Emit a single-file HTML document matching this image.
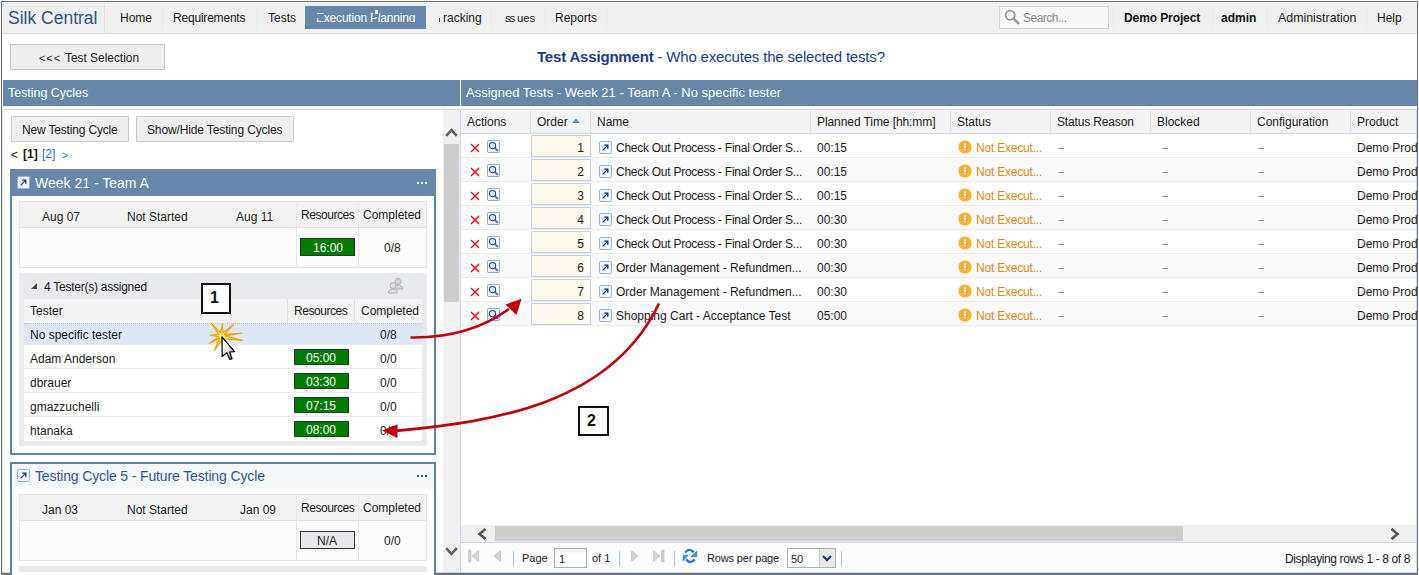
<!DOCTYPE html><html><head><meta charset="utf-8"><style>
*{box-sizing:border-box;margin:0;padding:0}
html,body{width:1419px;height:575px;overflow:hidden;background:#fff}
body{font-family:"Liberation Sans",sans-serif;font-size:12px;color:#1b1b1b;position:relative}
.a{position:absolute;white-space:nowrap}
.t{line-height:16px}
svg{position:absolute;overflow:visible}
</style></head><body>
<div class="a" style="left:1px;top:1px;width:1417px;height:1px;background:#6b7177"></div>
<div class="a" style="left:1px;top:1px;width:1px;height:574px;background:#6b7177"></div>
<div class="a" style="left:1417px;top:1px;width:1px;height:574px;background:#6b7177"></div>
<div class="a" style="left:1px;top:573px;width:1417px;height:2px;background:#6b7177"></div>
<div class="a" style="left:2px;top:2px;width:1415px;height:31px;background:#f0f0f0"></div>
<div class="a" style="left:2px;top:33px;width:1415px;height:1px;background:#d9d9d9"></div>
<div class="a t" style="left:8px;top:8px;font-size:17.5px;color:#34527a;line-height:20px">Silk Central</div>
<div class="a" style="left:104px;top:3px;width:1px;height:30px;background:#e2e2e2"></div>
<div class="a" style="left:162px;top:5px;width:1px;height:25px;background:#ebebeb"></div>
<div class="a" style="left:256px;top:5px;width:1px;height:25px;background:#ebebeb"></div>
<div class="a" style="left:491px;top:5px;width:1px;height:25px;background:#ebebeb"></div>
<div class="a" style="left:545px;top:5px;width:1px;height:25px;background:#ebebeb"></div>
<div class="a" style="left:606px;top:5px;width:1px;height:25px;background:#ebebeb"></div>
<div class="a" style="left:1113px;top:5px;width:1px;height:25px;background:#ebebeb"></div>
<div class="a" style="left:1212px;top:5px;width:1px;height:25px;background:#ebebeb"></div>
<div class="a" style="left:1267px;top:5px;width:1px;height:25px;background:#ebebeb"></div>
<div class="a" style="left:1366px;top:5px;width:1px;height:25px;background:#ebebeb"></div>
<div class="a t" style="left:120px;top:10px;font-size:12px">Home</div>
<div class="a t" style="left:173px;top:10px;font-size:12px;letter-spacing:-0.2px">Requirements</div>
<div class="a t" style="left:268px;top:10px;font-size:12px">Tests</div>
<div class="a" style="left:305px;top:6px;width:121px;height:23px;background:#6787aa"></div>
<div class="a t" style="left:316px;top:10px;font-size:12px;color:#fff;letter-spacing:-0.2px">Execution Planning</div>
<div class="a" style="left:315px;top:14px;width:8px;height:4px;background:#6787aa"></div>
<div class="a" style="left:373px;top:13px;width:6px;height:4px;background:#6787aa"></div>
<div class="a" style="left:375px;top:10px;width:3px;height:4px;background:#f4f4f4"></div>
<div class="a" style="left:402px;top:22px;width:17px;height:4px;background:#6787aa"></div>
<div class="a" style="left:439px;top:18px;width:1px;height:4px;background:#555"></div>
<div class="a t" style="left:443px;top:10px;font-size:12px">racking</div>
<div class="a t" style="left:505px;top:10px;font-size:11.5px;letter-spacing:-1.2px">ss</div>
<div class="a" style="left:510px;top:13px;width:4px;height:3px;background:#f0f0f0"></div>
<div class="a t" style="left:517px;top:10px;font-size:11.3px">ues</div>
<div class="a t" style="left:555px;top:10px;font-size:12px">Reports</div>
<div class="a" style="left:999px;top:6px;width:110px;height:23px;background:#f8f8f8;border:1px solid #d6d6d6"></div>
<div class="a t" style="left:1023px;top:10px;font-size:12px;color:#8a8a8a;letter-spacing:-0.5px">Search...</div>
<div class="a t" style="left:1124px;top:10px;font-size:12px;color:#111;font-weight:bold;letter-spacing:-0.1px">Demo Project</div>
<div class="a t" style="left:1221px;top:10px;font-size:12px;color:#111;font-weight:bold">admin</div>
<div class="a t" style="left:1278px;top:10px;font-size:12.4px">Administration</div>
<div class="a t" style="left:1377px;top:10px;font-size:12px">Help</div>
<div class="a" style="left:10px;top:44px;width:155px;height:26px;background:#efefef;border:1px solid #c6c6c6"></div>
<div class="a t" style="left:39px;top:50px;font-size:11px;letter-spacing:0.9px">&lt;&lt;&lt;</div>
<div class="a t" style="left:65px;top:50px;font-size:11.9px">Test Selection</div>
<div class="a t" style="left:537px;top:48px;font-size:15px;color:#1b3c8c;letter-spacing:-0.18px;line-height:18px"><b>Test Assignment</b> - Who executes the selected tests?</div>
<div class="a" style="left:3px;top:80px;width:457px;height:26px;background:#6787aa"></div>
<div class="a" style="left:461px;top:80px;width:956px;height:26px;background:#6787aa"></div>
<div class="a t" style="left:8px;top:85px;font-size:12.45px;color:#fff">Testing Cycles</div>
<div class="a t" style="left:466px;top:85px;font-size:13px;color:#fff">Assigned Tests - Week 21 - Team A - No specific tester</div>
<div class="a" style="left:2px;top:109px;width:1415px;height:1px;background:#c9d8ee"></div>
<div class="a" style="left:460px;top:109px;width:1px;height:464px;background:#c9d8ee"></div>
<div class="a" style="left:2px;top:109px;width:1px;height:464px;background:#d6e2f2"></div>
<div class="a" style="left:1416px;top:109px;width:1px;height:464px;background:#c9d8ee"></div>
<div class="a" style="left:2px;top:572px;width:1415px;height:1px;background:#c9d8ee"></div>

<div class="a" style="left:11px;top:116px;width:118px;height:26px;background:#efefef;border:1px solid #cacaca"></div>
<div class="a t" style="left:22px;top:122px;font-size:12px;letter-spacing:-0.17px">New Testing Cycle</div>
<div class="a" style="left:136px;top:116px;width:158px;height:26px;background:#efefef;border:1px solid #cacaca"></div>
<div class="a t" style="left:147px;top:122px;font-size:12px;letter-spacing:-0.13px">Show/Hide Testing Cycles</div>
<div class="a t" style="left:11px;top:147px;font-size:12px;color:#111">&lt;</div>
<div class="a t" style="left:23px;top:146px;font-size:12px;color:#111;font-weight:bold">[1]</div>
<div class="a t" style="left:42px;top:146px;font-size:12px;color:#2a6fd6">[2]</div>
<div class="a t" style="left:62px;top:147px;font-size:11px;color:#2a6fd6">&gt;</div>
<div class="a" style="left:443px;top:110px;width:17px;height:462px;background:#f0f0f0"></div>
<div class="a" style="left:444px;top:144px;width:15px;height:158px;background:#cdcdcd"></div>
<svg style="left:445px;top:127px" width="13" height="10" viewBox="0 0 13 10"><path d="M1.2 8.8 L6.5 3.2 L11.8 8.8" fill="none" stroke="#606060" stroke-width="2.6"/></svg>
<svg style="left:445px;top:547px" width="13" height="10" viewBox="0 0 13 10"><path d="M1.2 1.2 L6.5 6.8 L11.8 1.2" fill="none" stroke="#606060" stroke-width="2.6"/></svg>
<div class="a" style="left:10px;top:169px;width:426px;height:286px;border:2px solid #5f80a8;background:#fff"></div>
<div class="a" style="left:10px;top:169px;width:426px;height:27px;background:#6787aa"></div>
<svg style="left:17px;top:176px" width="13" height="13" viewBox="0 0 13 13"><rect x="0.5" y="0.5" width="12" height="12" rx="1.5" fill="#f4f8fd" stroke="#8fb5e3"/><path d="M3.6 9.4 L8.6 4.4" stroke="#10288a" stroke-width="1.1"/><path d="M5.2 4.2 H8.8 V7.8" fill="none" stroke="#10288a" stroke-width="1.3"/></svg>
<div class="a t" style="left:35px;top:175px;font-size:14px;color:#fff">Week 21 - Team A</div>
<div class="a" style="left:417px;top:182px;width:2px;height:2px;background:#fff"></div>
<div class="a" style="left:421px;top:182px;width:2px;height:2px;background:#fff"></div>
<div class="a" style="left:425px;top:182px;width:2px;height:2px;background:#fff"></div>
<div class="a" style="left:19px;top:201px;width:408px;height:67px;background:#fcfcfc;border:1px solid #e3e3e3"></div>
<div class="a" style="left:20px;top:202px;width:406px;height:25px;background:#f2f2f2"></div>
<div class="a" style="left:20px;top:227px;width:406px;height:1px;background:#e3e3e3"></div>
<div class="a" style="left:296px;top:202px;width:1px;height:65px;background:#e6e6e6"></div>
<div class="a" style="left:358px;top:202px;width:1px;height:65px;background:#e6e6e6"></div>
<div class="a t" style="left:42px;top:209px;font-size:12px">Aug 07</div>
<div class="a t" style="left:127px;top:209px;font-size:12px">Not Started</div>
<div class="a t" style="left:236px;top:209px;font-size:12px">Aug 11</div>
<div class="a t" style="left:301px;top:207px;font-size:12px;letter-spacing:-0.45px">Resources</div>
<div class="a t" style="left:363px;top:207px;font-size:12px">Completed</div>
<div class="a" style="left:300px;top:238px;width:55px;height:18px;background:#007a00;border:1px solid #1f3d1f"></div>
<div class="a t" style="left:313px;top:240px;font-size:12px;color:#fff">16:00</div>
<div class="a t" style="left:384px;top:240px;font-size:12px">0/8</div>
<div class="a" style="left:19px;top:273px;width:408px;height:173px;background:#e9eaee"></div>
<svg style="left:30px;top:282px" width="8" height="8" viewBox="0 0 8 8"><path d="M7 1 V7 H1 Z" fill="#444"/></svg>
<div class="a t" style="left:44px;top:279px;font-size:12px;letter-spacing:-0.25px">4 Tester(s) assigned</div>
<svg style="left:387px;top:277px" width="17" height="17" viewBox="0 0 17 17"><circle cx="11" cy="4.5" r="3" fill="#d6d6d6" stroke="#a8a8a8" stroke-width=".8"/><path d="M6.5 12 Q6.5 8 11 8 Q15.5 8 15.5 12 Z" fill="#d6d6d6" stroke="#a8a8a8" stroke-width=".8"/><circle cx="6" cy="8.5" r="3" fill="#e0e0e0" stroke="#a8a8a8" stroke-width=".8"/><path d="M1.5 16 Q1.5 12 6 12 Q10.5 12 10.5 16 Z" fill="#e0e0e0" stroke="#a8a8a8" stroke-width=".8"/></svg>
<div class="a" style="left:24px;top:299px;width:398px;height:142px;background:#fff"></div>
<div class="a" style="left:24px;top:299px;width:398px;height:23px;background:#f3f3f3"></div>
<div class="a" style="left:287px;top:299px;width:1px;height:23px;background:#e0e0e0"></div>
<div class="a" style="left:354px;top:299px;width:1px;height:23px;background:#e0e0e0"></div>
<div class="a t" style="left:30px;top:303px;font-size:12px">Tester</div>
<div class="a t" style="left:294px;top:303px;font-size:12px;letter-spacing:-0.45px">Resources</div>
<div class="a t" style="left:361px;top:303px;font-size:12px">Completed</div>
<div class="a" style="left:24px;top:323px;width:398px;height:22px;background:#dde7f6;border-top:1px dotted #a9c1e6;border-bottom:1px dotted #a9c1e6"></div>
<div class="a t" style="left:30px;top:327px;font-size:12px">No specific tester</div>
<div class="a t" style="left:380px;top:327px;font-size:12px">0/8</div>
<div class="a" style="left:24px;top:344px;width:398px;height:1px;background:#ececec"></div>
<div class="a t" style="left:30px;top:351px;font-size:12px">Adam Anderson</div>
<div class="a" style="left:294px;top:349px;width:55px;height:16px;background:#007a00;border:1px solid #1f3d1f"></div>
<div class="a t" style="left:306px;top:350px;font-size:12px;color:#fff">05:00</div>
<div class="a t" style="left:380px;top:351px;font-size:12px">0/0</div>
<div class="a" style="left:24px;top:368px;width:398px;height:1px;background:#ececec"></div>
<div class="a t" style="left:30px;top:375px;font-size:12px">dbrauer</div>
<div class="a" style="left:294px;top:373px;width:55px;height:16px;background:#007a00;border:1px solid #1f3d1f"></div>
<div class="a t" style="left:306px;top:374px;font-size:12px;color:#fff">03:30</div>
<div class="a t" style="left:380px;top:375px;font-size:12px">0/0</div>
<div class="a" style="left:24px;top:392px;width:398px;height:1px;background:#ececec"></div>
<div class="a t" style="left:30px;top:399px;font-size:12px">gmazzuchelli</div>
<div class="a" style="left:294px;top:397px;width:55px;height:16px;background:#007a00;border:1px solid #1f3d1f"></div>
<div class="a t" style="left:306px;top:398px;font-size:12px;color:#fff">07:15</div>
<div class="a t" style="left:380px;top:399px;font-size:12px">0/0</div>
<div class="a" style="left:24px;top:416px;width:398px;height:1px;background:#ececec"></div>
<div class="a t" style="left:30px;top:423px;font-size:12px">htanaka</div>
<div class="a" style="left:294px;top:421px;width:55px;height:16px;background:#007a00;border:1px solid #1f3d1f"></div>
<div class="a t" style="left:306px;top:422px;font-size:12px;color:#fff">08:00</div>
<div class="a t" style="left:380px;top:423px;font-size:12px">0/0</div>
<div class="a" style="left:10px;top:462px;width:426px;height:139px;border:2px solid #5f80a8;background:#fff"></div>
<div class="a" style="left:12px;top:464px;width:422px;height:25px;background:#f6f7f9"></div>
<svg style="left:17px;top:469px" width="13" height="13" viewBox="0 0 13 13"><rect x="0.5" y="0.5" width="12" height="12" rx="1.5" fill="#f4f8fd" stroke="#8fb5e3"/><path d="M3.6 9.4 L8.6 4.4" stroke="#10288a" stroke-width="1.1"/><path d="M5.2 4.2 H8.8 V7.8" fill="none" stroke="#10288a" stroke-width="1.3"/></svg>
<div class="a t" style="left:35px;top:468px;font-size:14px;color:#2c579a;letter-spacing:-0.13px">Testing Cycle 5 - Future Testing Cycle</div>
<div class="a" style="left:417px;top:475px;width:2px;height:2px;background:#2f5a94"></div>
<div class="a" style="left:421px;top:475px;width:2px;height:2px;background:#2f5a94"></div>
<div class="a" style="left:425px;top:475px;width:2px;height:2px;background:#2f5a94"></div>
<div class="a" style="left:19px;top:494px;width:408px;height:67px;background:#fcfcfc;border:1px solid #e3e3e3"></div>
<div class="a" style="left:20px;top:495px;width:406px;height:25px;background:#f2f2f2"></div>
<div class="a" style="left:20px;top:520px;width:406px;height:1px;background:#e3e3e3"></div>
<div class="a" style="left:296px;top:495px;width:1px;height:65px;background:#e6e6e6"></div>
<div class="a" style="left:358px;top:495px;width:1px;height:65px;background:#e6e6e6"></div>
<div class="a t" style="left:42px;top:502px;font-size:12px">Jan 03</div>
<div class="a t" style="left:127px;top:502px;font-size:12px">Not Started</div>
<div class="a t" style="left:240px;top:502px;font-size:12px">Jan 09</div>
<div class="a t" style="left:301px;top:500px;font-size:12px;letter-spacing:-0.45px">Resources</div>
<div class="a t" style="left:363px;top:500px;font-size:12px">Completed</div>
<div class="a" style="left:300px;top:531px;width:55px;height:18px;background:#e8e9ec;border:1px solid #333"></div>
<div class="a t" style="left:317px;top:533px;font-size:12px">N/A</div>
<div class="a t" style="left:384px;top:533px;font-size:12px">0/0</div>
<div class="a" style="left:19px;top:566px;width:408px;height:6px;background:#e9eaee"></div>
<div class="a" style="left:461px;top:110px;width:955px;height:23px;background:#f3f3f3"></div>
<div class="a" style="left:461px;top:133px;width:955px;height:1px;background:#c9d8ee"></div>
<div class="a" style="left:530px;top:111px;width:1px;height:22px;background:#dcdcdc"></div>
<div class="a" style="left:590px;top:111px;width:1px;height:22px;background:#dcdcdc"></div>
<div class="a" style="left:810px;top:111px;width:1px;height:22px;background:#dcdcdc"></div>
<div class="a" style="left:950px;top:111px;width:1px;height:22px;background:#dcdcdc"></div>
<div class="a" style="left:1050px;top:111px;width:1px;height:22px;background:#dcdcdc"></div>
<div class="a" style="left:1150px;top:111px;width:1px;height:22px;background:#dcdcdc"></div>
<div class="a" style="left:1250px;top:111px;width:1px;height:22px;background:#dcdcdc"></div>
<div class="a" style="left:1350px;top:111px;width:1px;height:22px;background:#dcdcdc"></div>
<div class="a t" style="left:467px;top:114px;font-size:12px">Actions</div>
<div class="a t" style="left:537px;top:114px;font-size:12px">Order</div>
<svg style="left:572px;top:118px" width="8" height="5" viewBox="0 0 8 5"><path d="M0 5 L4 0.5 L8 5 Z" fill="#5b8fd6"/></svg>
<div class="a t" style="left:597px;top:114px;font-size:12px">Name</div>
<div class="a t" style="left:817px;top:114px;font-size:12px;letter-spacing:-0.08px">Planned Time [hh:mm]</div>
<div class="a t" style="left:957px;top:114px;font-size:12px">Status</div>
<div class="a t" style="left:1057px;top:114px;font-size:12px;letter-spacing:-0.15px">Status Reason</div>
<div class="a t" style="left:1157px;top:114px;font-size:12px">Blocked</div>
<div class="a t" style="left:1257px;top:114px;font-size:12px">Configuration</div>
<div class="a t" style="left:1357px;top:114px;font-size:12px">Product</div>
<div class="a" style="left:461px;top:134px;width:955px;height:23px;background:#ffffff"></div>
<svg style="left:470px;top:143px" width="10" height="10" viewBox="0 0 10 10"><path d="M1 1 L9 9 M9 1 L1 9" stroke="#e0141e" stroke-width="1.45"/></svg>
<svg style="left:487px;top:140px" width="13" height="13" viewBox="0 0 13 13"><rect x="0.5" y="0.5" width="12" height="12" rx="1" fill="#fff" stroke="#86a9dc"/><circle cx="5.5" cy="5.6" r="3.2" fill="#e6ecfb" stroke="#1d3c8c" stroke-width="1.05"/><path d="M7.9 8 L10.6 10.6" stroke="#3552c4" stroke-width="1.5" stroke-linecap="round"/></svg>
<div class="a" style="left:531px;top:135px;width:60px;height:22px;background:#fdf9ee;border:1px solid #c3cfdf"></div>
<div class="a t" style="left:570px;top:140px;font-size:12px;color:#1b1b1b;width:14px;text-align:right">1</div>
<svg style="left:599px;top:141px" width="13" height="13" viewBox="0 0 13 13"><rect x="0.5" y="0.5" width="12" height="12" rx="1.5" fill="#f4f8fd" stroke="#8fb5e3"/><path d="M3.6 9.4 L8.6 4.4" stroke="#10288a" stroke-width="1.1"/><path d="M5.2 4.2 H8.8 V7.8" fill="none" stroke="#10288a" stroke-width="1.3"/></svg>
<div class="a t" style="left:616px;top:140px;font-size:12px;letter-spacing:-0.26px">Check Out Process - Final Order S...</div>
<div class="a t" style="left:817px;top:140px;font-size:12px">00:15</div>
<svg style="left:958px;top:140px" width="14" height="14" viewBox="0 0 14 14"><circle cx="7" cy="7" r="6.6" fill="#f9ab28"/><circle cx="7" cy="7" r="5.2" fill="none" stroke="#fcc566" stroke-width=".7"/><rect x="6" y="3.3" width="2" height="4.6" fill="#fff"/><rect x="6" y="8.9" width="2" height="1.4" fill="#fff"/></svg>
<div class="a t" style="left:976px;top:140px;font-size:12px;color:#d98c24;letter-spacing:-0.2px">Not Execut...</div>
<div class="a" style="left:1058px;top:148px;width:6px;height:1px;background:#9a9a9a"></div>
<div class="a" style="left:1162px;top:148px;width:6px;height:1px;background:#9a9a9a"></div>
<div class="a" style="left:1258px;top:148px;width:6px;height:1px;background:#9a9a9a"></div>
<div class="a t" style="left:1357px;top:140px;font-size:12px">Demo Prod</div>
<div class="a" style="left:461px;top:158px;width:955px;height:23px;background:#f9f9f9"></div>
<div class="a" style="left:461px;top:157px;width:955px;height:1px;background:#ebebeb"></div>
<svg style="left:470px;top:167px" width="10" height="10" viewBox="0 0 10 10"><path d="M1 1 L9 9 M9 1 L1 9" stroke="#e0141e" stroke-width="1.45"/></svg>
<svg style="left:487px;top:164px" width="13" height="13" viewBox="0 0 13 13"><rect x="0.5" y="0.5" width="12" height="12" rx="1" fill="#fff" stroke="#86a9dc"/><circle cx="5.5" cy="5.6" r="3.2" fill="#e6ecfb" stroke="#1d3c8c" stroke-width="1.05"/><path d="M7.9 8 L10.6 10.6" stroke="#3552c4" stroke-width="1.5" stroke-linecap="round"/></svg>
<div class="a" style="left:531px;top:159px;width:60px;height:22px;background:#fdf9ee;border:1px solid #c3cfdf"></div>
<div class="a t" style="left:570px;top:164px;font-size:12px;color:#1b1b1b;width:14px;text-align:right">2</div>
<svg style="left:599px;top:165px" width="13" height="13" viewBox="0 0 13 13"><rect x="0.5" y="0.5" width="12" height="12" rx="1.5" fill="#f4f8fd" stroke="#8fb5e3"/><path d="M3.6 9.4 L8.6 4.4" stroke="#10288a" stroke-width="1.1"/><path d="M5.2 4.2 H8.8 V7.8" fill="none" stroke="#10288a" stroke-width="1.3"/></svg>
<div class="a t" style="left:616px;top:164px;font-size:12px;letter-spacing:-0.26px">Check Out Process - Final Order S...</div>
<div class="a t" style="left:817px;top:164px;font-size:12px">00:15</div>
<svg style="left:958px;top:164px" width="14" height="14" viewBox="0 0 14 14"><circle cx="7" cy="7" r="6.6" fill="#f9ab28"/><circle cx="7" cy="7" r="5.2" fill="none" stroke="#fcc566" stroke-width=".7"/><rect x="6" y="3.3" width="2" height="4.6" fill="#fff"/><rect x="6" y="8.9" width="2" height="1.4" fill="#fff"/></svg>
<div class="a t" style="left:976px;top:164px;font-size:12px;color:#d98c24;letter-spacing:-0.2px">Not Execut...</div>
<div class="a" style="left:1058px;top:172px;width:6px;height:1px;background:#9a9a9a"></div>
<div class="a" style="left:1162px;top:172px;width:6px;height:1px;background:#9a9a9a"></div>
<div class="a" style="left:1258px;top:172px;width:6px;height:1px;background:#9a9a9a"></div>
<div class="a t" style="left:1357px;top:164px;font-size:12px">Demo Prod</div>
<div class="a" style="left:461px;top:182px;width:955px;height:23px;background:#ffffff"></div>
<div class="a" style="left:461px;top:181px;width:955px;height:1px;background:#ebebeb"></div>
<svg style="left:470px;top:191px" width="10" height="10" viewBox="0 0 10 10"><path d="M1 1 L9 9 M9 1 L1 9" stroke="#e0141e" stroke-width="1.45"/></svg>
<svg style="left:487px;top:188px" width="13" height="13" viewBox="0 0 13 13"><rect x="0.5" y="0.5" width="12" height="12" rx="1" fill="#fff" stroke="#86a9dc"/><circle cx="5.5" cy="5.6" r="3.2" fill="#e6ecfb" stroke="#1d3c8c" stroke-width="1.05"/><path d="M7.9 8 L10.6 10.6" stroke="#3552c4" stroke-width="1.5" stroke-linecap="round"/></svg>
<div class="a" style="left:531px;top:183px;width:60px;height:22px;background:#fdf9ee;border:1px solid #c3cfdf"></div>
<div class="a t" style="left:570px;top:188px;font-size:12px;color:#1b1b1b;width:14px;text-align:right">3</div>
<svg style="left:599px;top:189px" width="13" height="13" viewBox="0 0 13 13"><rect x="0.5" y="0.5" width="12" height="12" rx="1.5" fill="#f4f8fd" stroke="#8fb5e3"/><path d="M3.6 9.4 L8.6 4.4" stroke="#10288a" stroke-width="1.1"/><path d="M5.2 4.2 H8.8 V7.8" fill="none" stroke="#10288a" stroke-width="1.3"/></svg>
<div class="a t" style="left:616px;top:188px;font-size:12px;letter-spacing:-0.26px">Check Out Process - Final Order S...</div>
<div class="a t" style="left:817px;top:188px;font-size:12px">00:15</div>
<svg style="left:958px;top:188px" width="14" height="14" viewBox="0 0 14 14"><circle cx="7" cy="7" r="6.6" fill="#f9ab28"/><circle cx="7" cy="7" r="5.2" fill="none" stroke="#fcc566" stroke-width=".7"/><rect x="6" y="3.3" width="2" height="4.6" fill="#fff"/><rect x="6" y="8.9" width="2" height="1.4" fill="#fff"/></svg>
<div class="a t" style="left:976px;top:188px;font-size:12px;color:#d98c24;letter-spacing:-0.2px">Not Execut...</div>
<div class="a" style="left:1058px;top:196px;width:6px;height:1px;background:#9a9a9a"></div>
<div class="a" style="left:1162px;top:196px;width:6px;height:1px;background:#9a9a9a"></div>
<div class="a" style="left:1258px;top:196px;width:6px;height:1px;background:#9a9a9a"></div>
<div class="a t" style="left:1357px;top:188px;font-size:12px">Demo Prod</div>
<div class="a" style="left:461px;top:206px;width:955px;height:23px;background:#f9f9f9"></div>
<div class="a" style="left:461px;top:205px;width:955px;height:1px;background:#ebebeb"></div>
<svg style="left:470px;top:215px" width="10" height="10" viewBox="0 0 10 10"><path d="M1 1 L9 9 M9 1 L1 9" stroke="#e0141e" stroke-width="1.45"/></svg>
<svg style="left:487px;top:212px" width="13" height="13" viewBox="0 0 13 13"><rect x="0.5" y="0.5" width="12" height="12" rx="1" fill="#fff" stroke="#86a9dc"/><circle cx="5.5" cy="5.6" r="3.2" fill="#e6ecfb" stroke="#1d3c8c" stroke-width="1.05"/><path d="M7.9 8 L10.6 10.6" stroke="#3552c4" stroke-width="1.5" stroke-linecap="round"/></svg>
<div class="a" style="left:531px;top:207px;width:60px;height:22px;background:#fdf9ee;border:1px solid #c3cfdf"></div>
<div class="a t" style="left:570px;top:212px;font-size:12px;color:#1b1b1b;width:14px;text-align:right">4</div>
<svg style="left:599px;top:213px" width="13" height="13" viewBox="0 0 13 13"><rect x="0.5" y="0.5" width="12" height="12" rx="1.5" fill="#f4f8fd" stroke="#8fb5e3"/><path d="M3.6 9.4 L8.6 4.4" stroke="#10288a" stroke-width="1.1"/><path d="M5.2 4.2 H8.8 V7.8" fill="none" stroke="#10288a" stroke-width="1.3"/></svg>
<div class="a t" style="left:616px;top:212px;font-size:12px;letter-spacing:-0.26px">Check Out Process - Final Order S...</div>
<div class="a t" style="left:817px;top:212px;font-size:12px">00:30</div>
<svg style="left:958px;top:212px" width="14" height="14" viewBox="0 0 14 14"><circle cx="7" cy="7" r="6.6" fill="#f9ab28"/><circle cx="7" cy="7" r="5.2" fill="none" stroke="#fcc566" stroke-width=".7"/><rect x="6" y="3.3" width="2" height="4.6" fill="#fff"/><rect x="6" y="8.9" width="2" height="1.4" fill="#fff"/></svg>
<div class="a t" style="left:976px;top:212px;font-size:12px;color:#d98c24;letter-spacing:-0.2px">Not Execut...</div>
<div class="a" style="left:1058px;top:220px;width:6px;height:1px;background:#9a9a9a"></div>
<div class="a" style="left:1162px;top:220px;width:6px;height:1px;background:#9a9a9a"></div>
<div class="a" style="left:1258px;top:220px;width:6px;height:1px;background:#9a9a9a"></div>
<div class="a t" style="left:1357px;top:212px;font-size:12px">Demo Prod</div>
<div class="a" style="left:461px;top:230px;width:955px;height:23px;background:#ffffff"></div>
<div class="a" style="left:461px;top:229px;width:955px;height:1px;background:#ebebeb"></div>
<svg style="left:470px;top:239px" width="10" height="10" viewBox="0 0 10 10"><path d="M1 1 L9 9 M9 1 L1 9" stroke="#e0141e" stroke-width="1.45"/></svg>
<svg style="left:487px;top:236px" width="13" height="13" viewBox="0 0 13 13"><rect x="0.5" y="0.5" width="12" height="12" rx="1" fill="#fff" stroke="#86a9dc"/><circle cx="5.5" cy="5.6" r="3.2" fill="#e6ecfb" stroke="#1d3c8c" stroke-width="1.05"/><path d="M7.9 8 L10.6 10.6" stroke="#3552c4" stroke-width="1.5" stroke-linecap="round"/></svg>
<div class="a" style="left:531px;top:231px;width:60px;height:22px;background:#fdf9ee;border:1px solid #c3cfdf"></div>
<div class="a t" style="left:570px;top:236px;font-size:12px;color:#1b1b1b;width:14px;text-align:right">5</div>
<svg style="left:599px;top:237px" width="13" height="13" viewBox="0 0 13 13"><rect x="0.5" y="0.5" width="12" height="12" rx="1.5" fill="#f4f8fd" stroke="#8fb5e3"/><path d="M3.6 9.4 L8.6 4.4" stroke="#10288a" stroke-width="1.1"/><path d="M5.2 4.2 H8.8 V7.8" fill="none" stroke="#10288a" stroke-width="1.3"/></svg>
<div class="a t" style="left:616px;top:236px;font-size:12px;letter-spacing:-0.26px">Check Out Process - Final Order S...</div>
<div class="a t" style="left:817px;top:236px;font-size:12px">00:30</div>
<svg style="left:958px;top:236px" width="14" height="14" viewBox="0 0 14 14"><circle cx="7" cy="7" r="6.6" fill="#f9ab28"/><circle cx="7" cy="7" r="5.2" fill="none" stroke="#fcc566" stroke-width=".7"/><rect x="6" y="3.3" width="2" height="4.6" fill="#fff"/><rect x="6" y="8.9" width="2" height="1.4" fill="#fff"/></svg>
<div class="a t" style="left:976px;top:236px;font-size:12px;color:#d98c24;letter-spacing:-0.2px">Not Execut...</div>
<div class="a" style="left:1058px;top:244px;width:6px;height:1px;background:#9a9a9a"></div>
<div class="a" style="left:1162px;top:244px;width:6px;height:1px;background:#9a9a9a"></div>
<div class="a" style="left:1258px;top:244px;width:6px;height:1px;background:#9a9a9a"></div>
<div class="a t" style="left:1357px;top:236px;font-size:12px">Demo Prod</div>
<div class="a" style="left:461px;top:254px;width:955px;height:23px;background:#f9f9f9"></div>
<div class="a" style="left:461px;top:253px;width:955px;height:1px;background:#ebebeb"></div>
<svg style="left:470px;top:263px" width="10" height="10" viewBox="0 0 10 10"><path d="M1 1 L9 9 M9 1 L1 9" stroke="#e0141e" stroke-width="1.45"/></svg>
<svg style="left:487px;top:260px" width="13" height="13" viewBox="0 0 13 13"><rect x="0.5" y="0.5" width="12" height="12" rx="1" fill="#fff" stroke="#86a9dc"/><circle cx="5.5" cy="5.6" r="3.2" fill="#e6ecfb" stroke="#1d3c8c" stroke-width="1.05"/><path d="M7.9 8 L10.6 10.6" stroke="#3552c4" stroke-width="1.5" stroke-linecap="round"/></svg>
<div class="a" style="left:531px;top:255px;width:60px;height:22px;background:#fdf9ee;border:1px solid #c3cfdf"></div>
<div class="a t" style="left:570px;top:260px;font-size:12px;color:#1b1b1b;width:14px;text-align:right">6</div>
<svg style="left:599px;top:261px" width="13" height="13" viewBox="0 0 13 13"><rect x="0.5" y="0.5" width="12" height="12" rx="1.5" fill="#f4f8fd" stroke="#8fb5e3"/><path d="M3.6 9.4 L8.6 4.4" stroke="#10288a" stroke-width="1.1"/><path d="M5.2 4.2 H8.8 V7.8" fill="none" stroke="#10288a" stroke-width="1.3"/></svg>
<div class="a t" style="left:616px;top:260px;font-size:12px;letter-spacing:-0.04px">Order Management - Refundmen...</div>
<div class="a t" style="left:817px;top:260px;font-size:12px">00:30</div>
<svg style="left:958px;top:260px" width="14" height="14" viewBox="0 0 14 14"><circle cx="7" cy="7" r="6.6" fill="#f9ab28"/><circle cx="7" cy="7" r="5.2" fill="none" stroke="#fcc566" stroke-width=".7"/><rect x="6" y="3.3" width="2" height="4.6" fill="#fff"/><rect x="6" y="8.9" width="2" height="1.4" fill="#fff"/></svg>
<div class="a t" style="left:976px;top:260px;font-size:12px;color:#d98c24;letter-spacing:-0.2px">Not Execut...</div>
<div class="a" style="left:1058px;top:268px;width:6px;height:1px;background:#9a9a9a"></div>
<div class="a" style="left:1162px;top:268px;width:6px;height:1px;background:#9a9a9a"></div>
<div class="a" style="left:1258px;top:268px;width:6px;height:1px;background:#9a9a9a"></div>
<div class="a t" style="left:1357px;top:260px;font-size:12px">Demo Prod</div>
<div class="a" style="left:461px;top:278px;width:955px;height:23px;background:#ffffff"></div>
<div class="a" style="left:461px;top:277px;width:955px;height:1px;background:#ebebeb"></div>
<svg style="left:470px;top:287px" width="10" height="10" viewBox="0 0 10 10"><path d="M1 1 L9 9 M9 1 L1 9" stroke="#e0141e" stroke-width="1.45"/></svg>
<svg style="left:487px;top:284px" width="13" height="13" viewBox="0 0 13 13"><rect x="0.5" y="0.5" width="12" height="12" rx="1" fill="#fff" stroke="#86a9dc"/><circle cx="5.5" cy="5.6" r="3.2" fill="#e6ecfb" stroke="#1d3c8c" stroke-width="1.05"/><path d="M7.9 8 L10.6 10.6" stroke="#3552c4" stroke-width="1.5" stroke-linecap="round"/></svg>
<div class="a" style="left:531px;top:279px;width:60px;height:22px;background:#fdf9ee;border:1px solid #c3cfdf"></div>
<div class="a t" style="left:570px;top:284px;font-size:12px;color:#1b1b1b;width:14px;text-align:right">7</div>
<svg style="left:599px;top:285px" width="13" height="13" viewBox="0 0 13 13"><rect x="0.5" y="0.5" width="12" height="12" rx="1.5" fill="#f4f8fd" stroke="#8fb5e3"/><path d="M3.6 9.4 L8.6 4.4" stroke="#10288a" stroke-width="1.1"/><path d="M5.2 4.2 H8.8 V7.8" fill="none" stroke="#10288a" stroke-width="1.3"/></svg>
<div class="a t" style="left:616px;top:284px;font-size:12px;letter-spacing:-0.04px">Order Management - Refundmen...</div>
<div class="a t" style="left:817px;top:284px;font-size:12px">00:30</div>
<svg style="left:958px;top:284px" width="14" height="14" viewBox="0 0 14 14"><circle cx="7" cy="7" r="6.6" fill="#f9ab28"/><circle cx="7" cy="7" r="5.2" fill="none" stroke="#fcc566" stroke-width=".7"/><rect x="6" y="3.3" width="2" height="4.6" fill="#fff"/><rect x="6" y="8.9" width="2" height="1.4" fill="#fff"/></svg>
<div class="a t" style="left:976px;top:284px;font-size:12px;color:#d98c24;letter-spacing:-0.2px">Not Execut...</div>
<div class="a" style="left:1058px;top:292px;width:6px;height:1px;background:#9a9a9a"></div>
<div class="a" style="left:1162px;top:292px;width:6px;height:1px;background:#9a9a9a"></div>
<div class="a" style="left:1258px;top:292px;width:6px;height:1px;background:#9a9a9a"></div>
<div class="a t" style="left:1357px;top:284px;font-size:12px">Demo Prod</div>
<div class="a" style="left:461px;top:302px;width:955px;height:23px;background:#f9f9f9"></div>
<div class="a" style="left:461px;top:301px;width:955px;height:1px;background:#ebebeb"></div>
<svg style="left:470px;top:311px" width="10" height="10" viewBox="0 0 10 10"><path d="M1 1 L9 9 M9 1 L1 9" stroke="#e0141e" stroke-width="1.45"/></svg>
<svg style="left:487px;top:308px" width="13" height="13" viewBox="0 0 13 13"><rect x="0.5" y="0.5" width="12" height="12" rx="1" fill="#fff" stroke="#86a9dc"/><circle cx="5.5" cy="5.6" r="3.2" fill="#e6ecfb" stroke="#1d3c8c" stroke-width="1.05"/><path d="M7.9 8 L10.6 10.6" stroke="#3552c4" stroke-width="1.5" stroke-linecap="round"/></svg>
<div class="a" style="left:531px;top:303px;width:60px;height:22px;background:#fdf9ee;border:1px solid #c3cfdf"></div>
<div class="a t" style="left:570px;top:308px;font-size:12px;color:#1b1b1b;width:14px;text-align:right">8</div>
<svg style="left:599px;top:309px" width="13" height="13" viewBox="0 0 13 13"><rect x="0.5" y="0.5" width="12" height="12" rx="1.5" fill="#f4f8fd" stroke="#8fb5e3"/><path d="M3.6 9.4 L8.6 4.4" stroke="#10288a" stroke-width="1.1"/><path d="M5.2 4.2 H8.8 V7.8" fill="none" stroke="#10288a" stroke-width="1.3"/></svg>
<div class="a t" style="left:616px;top:308px;font-size:12px;letter-spacing:0px">Shopping Cart - Acceptance Test</div>
<div class="a t" style="left:817px;top:308px;font-size:12px">05:00</div>
<svg style="left:958px;top:308px" width="14" height="14" viewBox="0 0 14 14"><circle cx="7" cy="7" r="6.6" fill="#f9ab28"/><circle cx="7" cy="7" r="5.2" fill="none" stroke="#fcc566" stroke-width=".7"/><rect x="6" y="3.3" width="2" height="4.6" fill="#fff"/><rect x="6" y="8.9" width="2" height="1.4" fill="#fff"/></svg>
<div class="a t" style="left:976px;top:308px;font-size:12px;color:#d98c24;letter-spacing:-0.2px">Not Execut...</div>
<div class="a" style="left:1058px;top:316px;width:6px;height:1px;background:#9a9a9a"></div>
<div class="a" style="left:1162px;top:316px;width:6px;height:1px;background:#9a9a9a"></div>
<div class="a" style="left:1258px;top:316px;width:6px;height:1px;background:#9a9a9a"></div>
<div class="a t" style="left:1357px;top:308px;font-size:12px">Demo Prod</div>
<div class="a" style="left:461px;top:325px;width:955px;height:1px;background:#ebebeb"></div>
<div class="a" style="left:461px;top:525px;width:955px;height:17px;background:#f0f0f0"></div>
<div class="a" style="left:495px;top:526px;width:688px;height:15px;background:#cdcdcd"></div>
<svg style="left:477px;top:528px" width="10" height="12" viewBox="0 0 10 12"><path d="M8.5 1 L2.5 6 L8.5 11" fill="none" stroke="#555" stroke-width="2.6"/></svg>
<svg style="left:1390px;top:528px" width="10" height="12" viewBox="0 0 10 12"><path d="M1.5 1 L7.5 6 L1.5 11" fill="none" stroke="#555" stroke-width="2.6"/></svg>
<div class="a" style="left:461px;top:542px;width:955px;height:1px;background:#c9d8ee"></div>
<div class="a" style="left:461px;top:543px;width:955px;height:29px;background:#fcfcfc"></div>
<svg style="left:468px;top:550px" width="12" height="12" viewBox="0 0 12 12"><rect x="0.5" y="0" width="2.5" height="12" fill="#cfcfcf" stroke="#bdbdbd" stroke-width=".5"/><path d="M10.5 0.5 V11.5 L4 6 Z" fill="#d4d4d4" stroke="#bdbdbd" stroke-width=".6"/></svg>
<svg style="left:493px;top:550px" width="8" height="12" viewBox="0 0 8 12"><path d="M7.5 0.5 V11.5 L1 6 Z" fill="#d4d4d4" stroke="#bdbdbd" stroke-width=".6"/></svg>
<div class="a" style="left:513px;top:551px;width:1px;height:15px;background:#a8c4ea"></div>
<div class="a" style="left:619px;top:551px;width:1px;height:15px;background:#a8c4ea"></div>
<div class="a" style="left:674px;top:551px;width:1px;height:15px;background:#a8c4ea"></div>
<div class="a" style="left:841px;top:551px;width:1px;height:15px;background:#a8c4ea"></div>
<div class="a t" style="left:522px;top:550px;font-size:11px">Page</div>
<div class="a" style="left:554px;top:548px;width:33px;height:20px;background:linear-gradient(#eef0f2,#fff 40%);border:1px solid #aab1bf"></div>
<div class="a t" style="left:559px;top:551px;font-size:11px">1</div>
<div class="a t" style="left:592px;top:550px;font-size:11px">of 1</div>
<svg style="left:631px;top:550px" width="8" height="12" viewBox="0 0 8 12"><path d="M0.5 0.5 V11.5 L7 6 Z" fill="#d4d4d4" stroke="#bdbdbd" stroke-width=".6"/></svg>
<svg style="left:653px;top:550px" width="12" height="12" viewBox="0 0 12 12"><path d="M0.5 0.5 V11.5 L7 6 Z" fill="#d4d4d4" stroke="#bdbdbd" stroke-width=".6"/><rect x="8.5" y="0" width="2.5" height="12" fill="#cfcfcf" stroke="#bdbdbd" stroke-width=".5"/></svg>
<svg style="left:680px;top:546px" width="20" height="20" viewBox="0 0 20 20"><path d="M5.2 6.6 Q9.2 1.2 13.8 6.4" fill="none" stroke="#2a78dc" stroke-width="2.4"/><path d="M16.8 5.3 L16.8 10.6 L11.3 10.6 Z" fill="#4d97ec" stroke="#2a78dc" stroke-width="0.8" stroke-linejoin="round"/><path d="M14.8 13.2 Q10.6 18.8 6 13.4" fill="none" stroke="#2a78dc" stroke-width="2.4"/><path d="M3.2 14.8 L3.2 9.3 L8 9.3 Z" fill="#4d97ec" stroke="#2a78dc" stroke-width="0.8" stroke-linejoin="round"/></svg>
<div class="a t" style="left:707px;top:550px;font-size:11px;letter-spacing:-0.15px">Rows per page</div>
<div class="a" style="left:787px;top:548px;width:49px;height:20px;background:#fff;border:1px solid #aab1bf"></div>
<div class="a" style="left:819px;top:549px;width:16px;height:18px;background:#e9e9e9;border-left:1px solid #c7c7c7"></div>
<div class="a t" style="left:791px;top:551px;font-size:11px">50</div>
<svg style="left:822px;top:555px" width="10" height="7" viewBox="0 0 10 7"><path d="M1 1 L5 5.2 L9 1" fill="none" stroke="#1d3870" stroke-width="2"/></svg>
<div class="a t" style="left:1285px;top:551px;font-size:12px;letter-spacing:-0.37px">Displaying rows 1 - 8 of 8</div>
<svg style="left:1004px;top:9px" width="16" height="16" viewBox="0 0 16 16"><circle cx="6.2" cy="6.2" r="4.6" fill="none" stroke="#9a9a9a" stroke-width="1.8"/><path d="M9.6 9.6 L14.2 14.2" stroke="#9a9a9a" stroke-width="2.6" stroke-linecap="round"/></svg>
<div class="a" style="left:201px;top:283px;width:30px;height:31px;background:#fff;border:2px solid #111"></div>
<div class="a t" style="left:210px;top:289px;font-size:16px;color:#111;font-weight:bold;line-height:18px">1</div>
<div class="a" style="left:578px;top:406px;width:31px;height:30px;background:#fff;border:2px solid #111"></div>
<div class="a t" style="left:587px;top:412px;font-size:16px;color:#111;font-weight:bold;line-height:18px">2</div>
<svg style="left:0;top:0" width="1419" height="575" viewBox="0 0 1419 575"><path d="M410.5 337.5 C445 338, 480 330, 509 309" fill="none" stroke="#c0000f" stroke-width="2.7"/><path d="M521.5 298.8 L505.5 304.5 L516.5 315 Z" fill="#c0000f"/><path d="M659 303.5 C611.6 403.3, 495.8 421.7, 396 430.8" fill="none" stroke="#c0000f" stroke-width="2.7"/><path d="M382 430.5 L397.5 424.3 L397.5 438 Z" fill="#c0000f"/></svg>
<svg style="left:200px;top:315px" width="50" height="50" viewBox="0 0 50 50"><defs><linearGradient id="cg" x1="0" y1="0" x2="0.8" y2="1"><stop offset="0.45" stop-color="#ffffff"/><stop offset="1" stop-color="#8c8c8c"/></linearGradient><radialGradient id="sg"><stop offset="0" stop-color="#fff9a0"/><stop offset="1" stop-color="#f7c21e"/></radialGradient></defs><path d="M10.0 20.2 L18.7 19.4 L11.3 8.3 L20.6 17.7 L22.5 8.9 L23.0 17.9 L33.7 9.3 L24.5 19.4 L41.9 18.3 L24.8 20.9 L42.8 25.4 L23.0 23.7 L14.4 35.5 L19.5 23.2 L9.1 28.6 L18.5 21.6 Z" fill="url(#sg)" stroke="#eaa500" stroke-width="1.1" stroke-linejoin="round"/><path d="M22 22 L22.2 41.6 L26.7 37.7 L29.9 44.4 L32.1 43.6 L29.6 37 L34.6 36.6 Z" fill="url(#cg)" stroke="#000" stroke-width="1.2" stroke-linejoin="round"/></svg>
</body></html>
